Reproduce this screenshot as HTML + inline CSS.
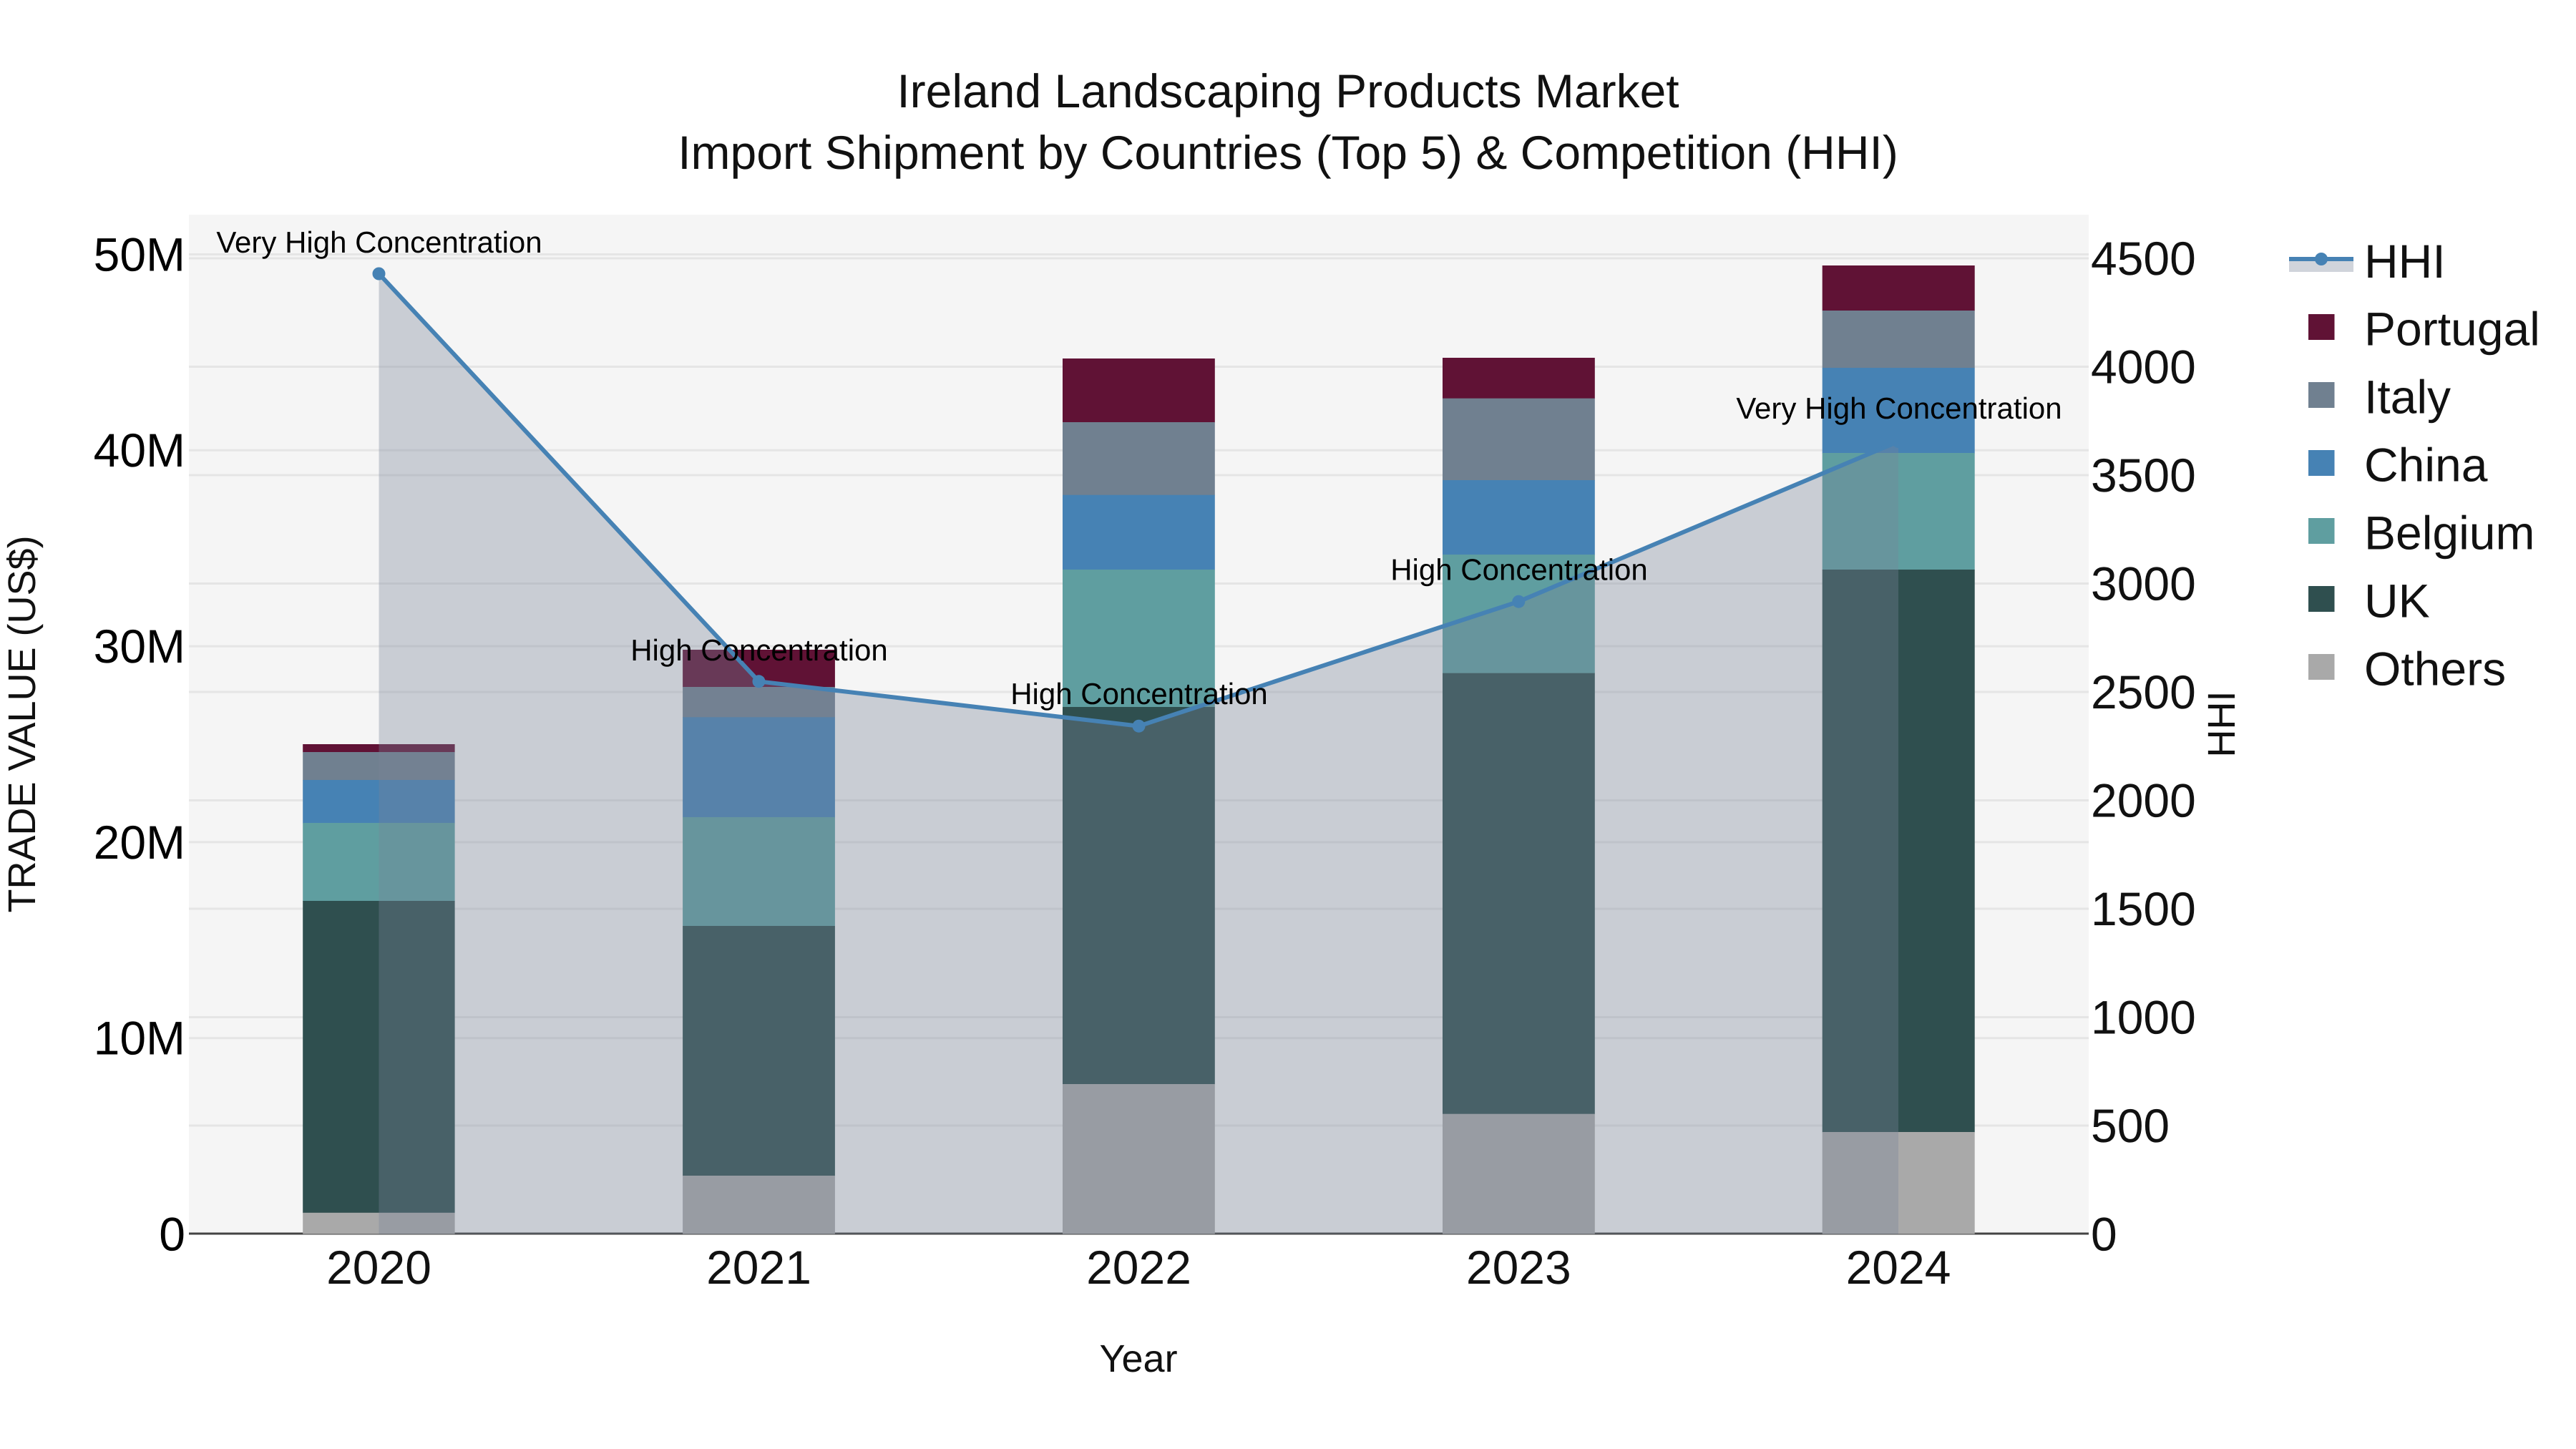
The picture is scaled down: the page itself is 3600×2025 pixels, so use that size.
<!DOCTYPE html>
<html><head><meta charset="utf-8"><style>
html,body{margin:0;padding:0;background:#fff}
svg{display:block}
text{font-family:"Liberation Sans",Arial,sans-serif;text-rendering:geometricPrecision}
</style></head><body>
<svg width="3600" height="2025" viewBox="0 0 3600 2025" xmlns="http://www.w3.org/2000/svg">
<rect width="3600" height="2025" fill="#fff"/>
<rect x="264" y="300" width="2655" height="1424.5" fill="#f5f5f5"/>
<g stroke="#e5e5e5" stroke-width="3">
<path d="M264 355.5H2919M264 629.3H2919M264 903.1H2919M264 1176.9H2919M264 1450.7H2919"/>
<path d="M264 361H2919M264 512.5H2919M264 664H2919M264 815.5H2919M264 967H2919M264 1118.5H2919M264 1270H2919M264 1421.5H2919M264 1573H2919"/>
</g>
<path d="M264 1724H2919" stroke="#444" stroke-width="3"/>
<g>
<!-- 2020 -->
<rect x="423.2" y="1040" width="212.4" height="11.5" fill="#601235"/>
<rect x="423.2" y="1051" width="212.4" height="39.5" fill="#708090"/>
<rect x="423.2" y="1090" width="212.4" height="60.5" fill="#4682b4"/>
<rect x="423.2" y="1150" width="212.4" height="109.5" fill="#5f9ea0"/>
<rect x="423.2" y="1259" width="212.4" height="436.3" fill="#2f4f4f"/>
<rect x="423.2" y="1694.8" width="212.4" height="29.7" fill="#a9a9a9"/>
<!-- 2021 -->
<rect x="954.1" y="908" width="212.8" height="52.5" fill="#601235"/>
<rect x="954.1" y="960" width="212.8" height="42.8" fill="#708090"/>
<rect x="954.1" y="1002.3" width="212.8" height="140.2" fill="#4682b4"/>
<rect x="954.1" y="1142" width="212.8" height="152.5" fill="#5f9ea0"/>
<rect x="954.1" y="1294" width="212.8" height="349.5" fill="#2f4f4f"/>
<rect x="954.1" y="1643" width="212.8" height="81.5" fill="#a9a9a9"/>
<!-- 2022 -->
<rect x="1485" y="501" width="212.8" height="89.5" fill="#601235"/>
<rect x="1485" y="590" width="212.8" height="102.2" fill="#708090"/>
<rect x="1485" y="691.7" width="212.8" height="104.8" fill="#4682b4"/>
<rect x="1485" y="796" width="212.8" height="192.5" fill="#5f9ea0"/>
<rect x="1485" y="988" width="212.8" height="527.5" fill="#2f4f4f"/>
<rect x="1485" y="1515" width="212.8" height="209.5" fill="#a9a9a9"/>
<!-- 2023 -->
<rect x="2016" y="500" width="212.8" height="57.2" fill="#601235"/>
<rect x="2016" y="556.7" width="212.8" height="114.8" fill="#708090"/>
<rect x="2016" y="671" width="212.8" height="104.5" fill="#4682b4"/>
<rect x="2016" y="775" width="212.8" height="166.2" fill="#5f9ea0"/>
<rect x="2016" y="940.7" width="212.8" height="616.5" fill="#2f4f4f"/>
<rect x="2016" y="1556.7" width="212.8" height="167.8" fill="#a9a9a9"/>
<!-- 2024 -->
<rect x="2546.7" y="371" width="213" height="63.5" fill="#601235"/>
<rect x="2546.7" y="434" width="213" height="80.5" fill="#708090"/>
<rect x="2546.7" y="514" width="213" height="119.5" fill="#4682b4"/>
<rect x="2546.7" y="633" width="213" height="163.5" fill="#5f9ea0"/>
<rect x="2546.7" y="796" width="213" height="786.5" fill="#2f4f4f"/>
<rect x="2546.7" y="1582" width="213" height="142.5" fill="#a9a9a9"/>
</g>
<path d="M529.5 382.5L1060.5 952.3L1591.5 1014.7L2122.3 840.7L2653 617V1724.5H529.5Z" fill="rgb(120,131,153)" fill-opacity=".35"/>
<path d="M529.5 382.5L1060.5 952.3L1591.5 1014.7L2122.3 840.7L2653 617" fill="none" stroke="#4682b4" stroke-width="6"/>
<g fill="#4682b4">
<circle cx="529.5" cy="382.5" r="9"/><circle cx="1060.5" cy="952.3" r="9"/><circle cx="1591.5" cy="1014.7" r="9"/><circle cx="2122.3" cy="840.7" r="9"/><circle cx="2653" cy="617" r="9"/>
</g>
<g font-size="42" fill="#000" text-anchor="middle">
<text x="530" y="353">Very High Concentration</text>
<text x="1061" y="923">High Concentration</text>
<text x="1592" y="984">High Concentration</text>
<text x="2123" y="810.5">High Concentration</text>
<text x="2654" y="585">Very High Concentration</text>
</g>
<g font-size="66" fill="#111" text-anchor="middle">
<text x="1800" y="150">Ireland Landscaping Products Market</text>
<text x="1800" y="236">Import Shipment by Countries (Top 5) &amp; Competition (HHI)</text>
</g>
<g font-size="66" fill="#000" text-anchor="end">
<text x="259" y="378.5">50M</text>
<text x="259" y="652">40M</text>
<text x="259" y="926">30M</text>
<text x="259" y="1200">20M</text>
<text x="259" y="1473.5">10M</text>
<text x="259" y="1747.5">0</text>
</g>
<g font-size="66" fill="#111">
<text x="2922" y="384">4500</text>
<text x="2922" y="535.5">4000</text>
<text x="2922" y="687">3500</text>
<text x="2922" y="838.5">3000</text>
<text x="2922" y="990">2500</text>
<text x="2922" y="1141.5">2000</text>
<text x="2922" y="1293">1500</text>
<text x="2922" y="1444.5">1000</text>
<text x="2922" y="1596">500</text>
<text x="2922" y="1747.5">0</text>
</g>
<g font-size="66" fill="#111" text-anchor="middle">
<text x="529.5" y="1794">2020</text>
<text x="1060.5" y="1794">2021</text>
<text x="1591.5" y="1794">2022</text>
<text x="2122.3" y="1794">2023</text>
<text x="2653" y="1794">2024</text>
</g>
<g font-size="54" fill="#111" text-anchor="middle">
<text x="1591" y="1917">Year</text>
<text transform="translate(49 1012) rotate(-90)">TRADE VALUE (US$)</text>
<text transform="translate(3123 1012) rotate(-90)">HHI</text>
</g>
<rect x="3199" y="362" width="90" height="18" fill="rgb(120,131,153)" fill-opacity=".35"/>
<path d="M3199 362H3289" stroke="#4682b4" stroke-width="6"/>
<circle cx="3244" cy="362" r="9" fill="#4682b4"/>
<g>
<rect x="3226" y="439" width="36.5" height="36" fill="#601235"/>
<rect x="3226" y="534" width="36.5" height="36" fill="#708090"/>
<rect x="3226" y="629" width="36.5" height="36" fill="#4682b4"/>
<rect x="3226" y="724" width="36.5" height="36" fill="#5f9ea0"/>
<rect x="3226" y="819" width="36.5" height="36" fill="#2f4f4f"/>
<rect x="3226" y="914" width="36.5" height="36" fill="#a9a9a9"/>
</g>
<g font-size="66" fill="#111">
<text x="3304" y="388">HHI</text>
<text x="3304" y="482.5">Portugal</text>
<text x="3304" y="577.5">Italy</text>
<text x="3304" y="672.5">China</text>
<text x="3304" y="767.5">Belgium</text>
<text x="3304" y="862.5">UK</text>
<text x="3304" y="957.5">Others</text>
</g>
</svg>
</body></html>
